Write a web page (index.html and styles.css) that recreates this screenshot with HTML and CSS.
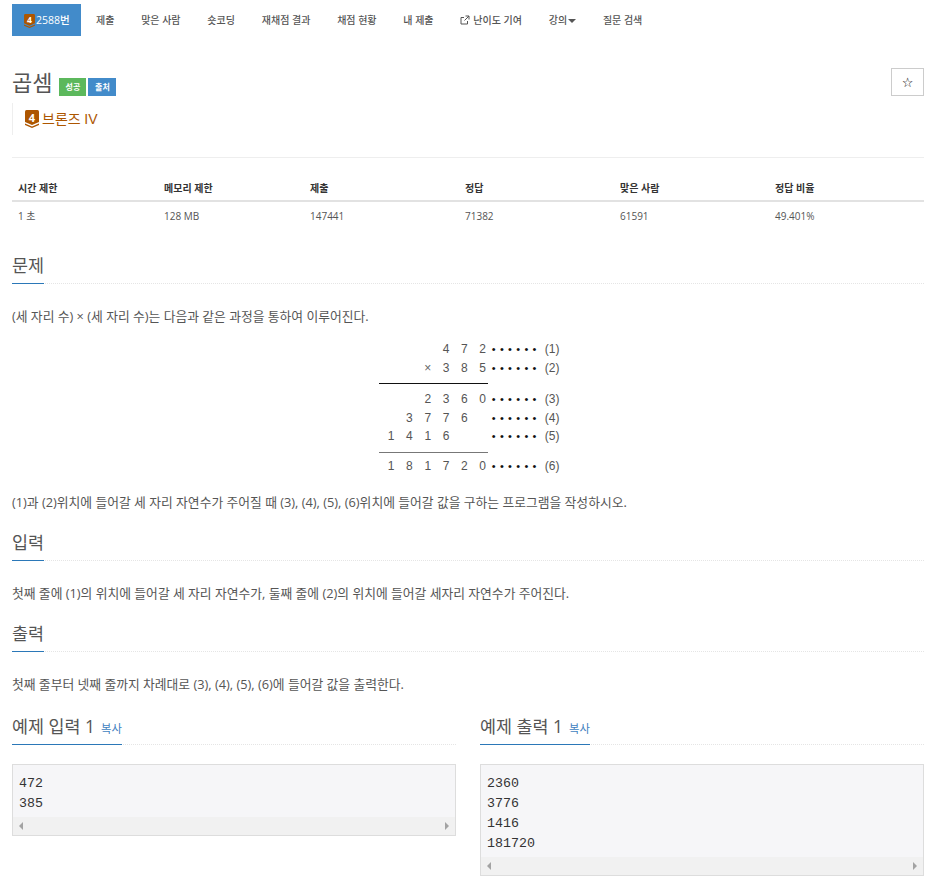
FILE: index.html
```html
<!DOCTYPE html>
<html lang="ko">
<head>
<meta charset="utf-8">
<title>곱셈</title>
<link rel="stylesheet" href="styles.css">
</head>
<body>
<nav class="tabs">
  <a class="tab active"><svg class="tier small" viewBox="0 0 14 18"><path d="M0 1.5Q0 0 1.5 0H12.5Q14 0 14 1.5V12L7 15L0 12Z" fill="#ad5600"/><path d="M0 13.5L7 16.5L14 13.5V15L7 18L0 15Z" fill="#ad5600"/><text x="7" y="11.5" class="tier-num">4</text></svg>2588번</a>
  <a class="tab">제출</a>
  <a class="tab">맞은 사람</a>
  <a class="tab">숏코딩</a>
  <a class="tab">재채점 결과</a>
  <a class="tab">채점 현황</a>
  <a class="tab">내 제출</a>
  <a class="tab"><svg class="ext" viewBox="0 0 10 10"><path d="M7.5 6V9H1V2.5H4M5.5 1H9V4.5M9 1L4.5 5.5" fill="none" stroke="#555" stroke-width="1"/></svg>난이도 기여</a>
  <a class="tab">강의<span class="caret"></span></a>
  <a class="tab">질문 검색</a>
</nav>

<header class="head">
  <div class="title-row">
    <h1 class="title">곱셈</h1>
    <span class="badge green">성공</span>
    <span class="badge blue">출처</span>
    <button class="star">☆</button>
  </div>
  <div class="tier-row">
    <svg class="tier" viewBox="0 0 14 18"><path d="M0 1.5Q0 0 1.5 0H12.5Q14 0 14 1.5V12L7 15L0 12Z" fill="#ad5600"/><path d="M0 13.5L7 16.5L14 13.5V15L7 18L0 15Z" fill="#ad5600"/><text x="7" y="11.5" class="tier-num">4</text></svg>
    <span class="tier-name">브론즈 <span class="tier-roman">IV</span></span>
  </div>
</header>

<table class="stats">
  <thead>
    <tr><th class="c1">시간 제한</th><th class="c1">메모리 제한</th><th class="c2">제출</th><th class="c2">정답</th><th class="c2">맞은 사람</th><th>정답 비율</th></tr>
  </thead>
  <tbody>
    <tr><td>1 초</td><td>128 MB</td><td>147441</td><td>71382</td><td>61591</td><td>49.401%</td></tr>
  </tbody>
</table>

<section class="sec first">
  <h2 class="sec-head"><span class="sec-title">문제</span></h2>
  <p class="para">(세 자리 수) × (세 자리 수)는 다음과 같은 과정을 통하여 이루어진다.</p>
  <div class="figure">
    <div class="mult">
      <span class="d c4">4</span><span class="d c5">7</span><span class="d c6">2</span><span class="dots">••••••</span><span class="lab">(1)</span>
      <span class="d c3 gray">×</span><span class="d c4">3</span><span class="d c5">8</span><span class="d c6">5</span><span class="dots">••••••</span><span class="lab">(2)</span>
      <span class="rule"></span>
      <span class="d c3">2</span><span class="d c4">3</span><span class="d c5">6</span><span class="d c6">0</span><span class="dots">••••••</span><span class="lab">(3)</span>
      <span class="d c2x">3</span><span class="d c3">7</span><span class="d c4">7</span><span class="d c5">6</span><span class="dots">••••••</span><span class="lab">(4)</span>
      <span class="d c1x">1</span><span class="d c2x">4</span><span class="d c3">1</span><span class="d c4">6</span><span class="dots">••••••</span><span class="lab">(5)</span>
      <span class="rule soft"></span>
      <span class="d c1x">1</span><span class="d c2x">8</span><span class="d c3">1</span><span class="d c4">7</span><span class="d c5">2</span><span class="d c6">0</span><span class="dots">••••••</span><span class="lab">(6)</span>
    </div>
  </div>
  <p class="para">(1)과 (2)위치에 들어갈 세 자리 자연수가 주어질 때 (3), (4), (5), (6)위치에 들어갈 값을 구하는 프로그램을 작성하시오.</p>
</section>

<section class="sec">
  <h2 class="sec-head"><span class="sec-title">입력</span></h2>
  <p class="para">첫째 줄에 (1)의 위치에 들어갈 세 자리 자연수가, 둘째 줄에 (2)의 위치에 들어갈 세자리 자연수가 주어진다.</p>
</section>

<section class="sec">
  <h2 class="sec-head"><span class="sec-title">출력</span></h2>
  <p class="para">첫째 줄부터 넷째 줄까지 차례대로 (3), (4), (5), (6)에 들어갈 값을 출력한다.</p>
</section>

<div class="samples">
  <section class="sample">
    <h2 class="sec-head"><span class="sec-title">예제 입력 1 <a class="copy">복사</a></span></h2>
    <div class="code">
      <pre class="pre">472
385</pre>
      <div class="scroll"><span class="arr left"></span><span class="arr right"></span></div>
    </div>
  </section>
  <section class="sample">
    <h2 class="sec-head"><span class="sec-title">예제 출력 1 <a class="copy">복사</a></span></h2>
    <div class="code">
      <pre class="pre">2360
3776
1416
181720</pre>
      <div class="scroll"><span class="arr left"></span><span class="arr right"></span></div>
    </div>
  </section>
</div>
</body>
</html>
```
FILE: styles.css
```css
* { box-sizing: border-box; }
html, body { height: 880px; overflow: hidden; }
body {
  margin: 0;
  padding: 4px 16px 0 12px;
  background: #fff;
  color: #555;
  font-family: "Open Sans", "Noto Sans CJK KR", sans-serif;
  font-size: 11.5px;
  line-height: 20px;
}
.tabs { display: flex; height: 32px; align-items: center; font-size: 10px; font-weight: 500; color: #555; }
.tab { display: flex; align-items: center; height: 32px; padding: 0 13.4px; white-space: nowrap; }
.tab.active { background: #428bca; color: #fff; padding: 0 0 0 12px; margin-right: 1.6px; width: 69px; font-size: 10.5px; }
.tier { width: 14px; height: 18px; display: block; }
.tier.small { width: 11px; height: 14px; margin: 2px 1px 0 0; }
.tier-num { fill: #fff; font-size: 11px; font-weight: 700; text-anchor: middle; font-family: "Open Sans", sans-serif; }
.ext { width: 10px; height: 10px; margin-right: 3px; }
.caret { display: inline-block; margin-left: 1px; margin-top: 2px; border-top: 4px solid #555; border-left: 4px solid transparent; border-right: 4px solid transparent; }

.head { margin-top: 32px; height: 90px; border-bottom: 1px solid #eee; }
.title-row { display: flex; align-items: center; height: 28px; position: relative; }
.title { margin: -1px 7px 0 0; font-size: 22px; font-weight: 400; line-height: 28px; color: #555; }
.badge { display: flex; align-items: center; justify-content: center; height: 18px; margin: 10px 2px 0 0; padding: 0 6px; font-size: 8px; font-weight: 700; color: #fff; }
.green { background: #5cb85c; width: 27px; }
.blue { background: #428bca; width: 28px; }
.star { margin-left: auto; width: 33px; height: 28px; padding: 0; background: #fff; border: 1px solid #ccc; color: #000; font: 13px "DejaVu Sans", sans-serif; }
.tier-row { display: flex; align-items: center; gap: 3px; height: 32px; margin-top: 7px; padding-left: 12px; border-left: 1px solid #eee; }
.tier-name { color: #ad5600; font-size: 14px; }
.tier-roman { font-size: 14px; font-family: "Liberation Sans", sans-serif; }

.stats { width: 912px; margin-top: 15px; border-collapse: collapse; table-layout: fixed; font-size: 10px; }
.stats th { height: 28px; padding: 2px 6px 0; text-align: left; font-weight: 700; color: #333; border-bottom: 2px solid #e2e2e2; }
.stats td { height: 29px; padding: 0 6px; color: #555; }
.c1 { width: 146px; }
.c2 { width: 155px; }

.sec-head { margin: 0; height: 33px; border-bottom: 1px dotted #e5e5e5; font-size: 17.4px; font-weight: 400; line-height: 28px; color: #555; }
.sec-title { display: inline-block; height: 33px; border-bottom: 1px solid #2b78b8; position: relative; }
.sec { margin-top: 16px; }
.sec.first { margin-top: 21px; }
.para { margin: 22px 0 0; font-size: 12.8px; line-height: 20px; color: #555; }
.para + .figure { margin-top: 13px; }
.figure + .para { margin-top: 0; }
.figure { height: 153px; display: flex; justify-content: center; padding-left: 12px; }

.mult {
  display: grid;
  grid-template-columns: repeat(6, 18.3px) 47px 26px;
  grid-template-rows: 19px 20px 11px 20px 18px 18px 14px 14px;
  align-items: center;
  justify-items: center;
  font-family: "Liberation Sans", sans-serif;
  font-size: 12px;
  line-height: 16px;
  color: #555;
  width: 184px;
}
.c1x { grid-column: 1; }
.c2x { grid-column: 2; }
.c3 { grid-column: 3; }
.c4 { grid-column: 4; }
.c5 { grid-column: 5; }
.c6 { grid-column: 6; }
.gray { color: #666; }
.dots { grid-column: 7; letter-spacing: 4.3px; font-size: 11px; color: #111; justify-self: start; margin-left: 0; }
.lab { grid-column: 8; justify-self: start; margin-left: 6px; }
.rule { grid-column: 1 / 7; justify-self: stretch; height: 1px; background: #111; margin: 0 4px 0 -3px; }
.rule.soft { background: #777; }

.samples { display: grid; grid-template-columns: 444px 444px; column-gap: 24px; margin-top: 18px; align-items: start; }
.copy { font-size: 11.3px; color: #3f7fc0; margin-left: 1.5px; }
.code { margin-top: 19px; background: #f6f6f8; border: 1px solid #ddd; }
.pre { margin: 0; padding: 9px 6px 3px; font-family: "Liberation Mono", monospace; font-size: 13.3px; line-height: 20px; color: #333; }
.scroll { display: flex; justify-content: space-between; align-items: center; height: 18px; padding: 0 6px; background: #f1f1f1; }
.arr { width: 0; height: 0; border-top: 4px solid transparent; border-bottom: 4px solid transparent; }
.left { border-right: 4px solid #a3a3a3; }
.right { border-left: 4px solid #a3a3a3; }
```
